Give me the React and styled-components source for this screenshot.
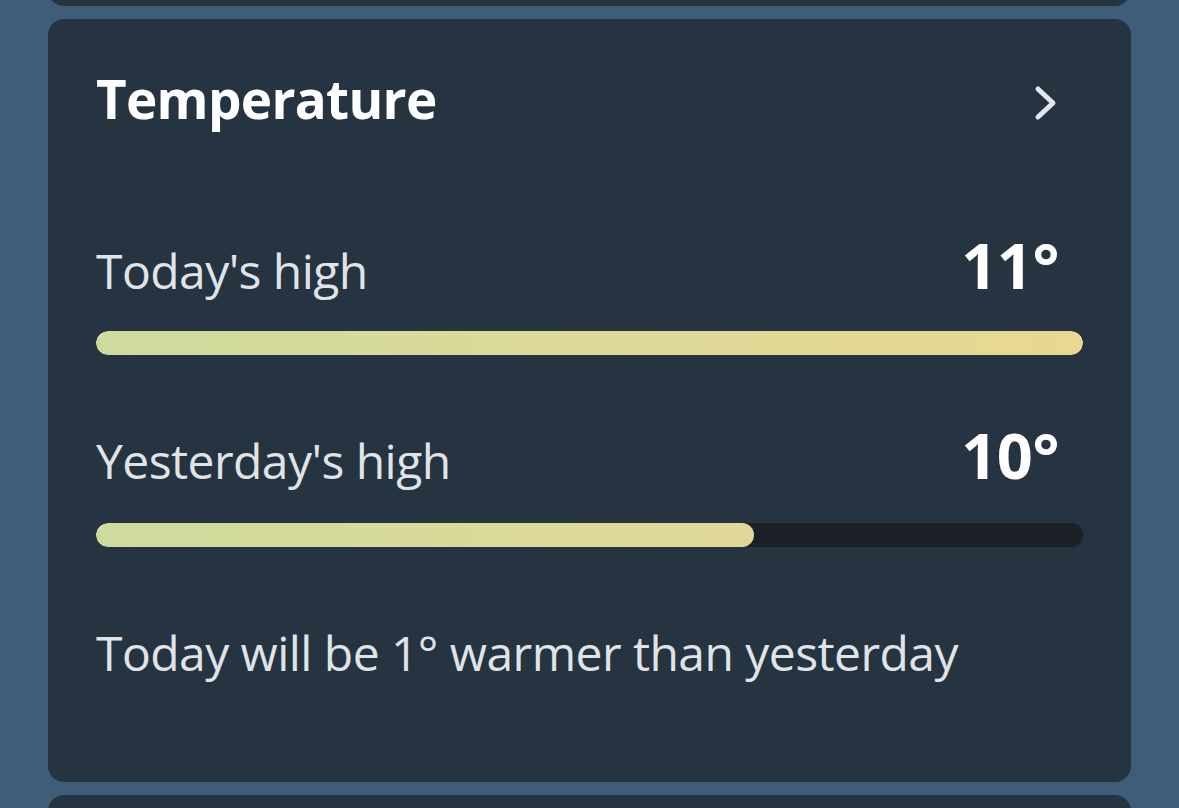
import React from "react";
import styled, { createGlobalStyle } from "styled-components";

const Global = createGlobalStyle`
  html, body { margin: 0; padding: 0; background: #3f5c79; }
  body { font-family: "Open Sans", "Noto Sans", sans-serif; overflow: hidden; }
`;

const Page = styled.div`
  width: 1179px;
  height: 808px;
  overflow: hidden;
  padding: 0 48px;
  box-sizing: border-box;
  display: flex;
  flex-direction: column;
  gap: 13px;
`;

const Card = styled.section`
  background: #263341;
  border-radius: 16px;
  flex-shrink: 0;
`;

const StubCard = styled(Card)`
  height: 100px;
  margin-top: -94px;
`;

const NextCard = styled(Card)`
  height: 200px;
`;

const MainCard = styled(Card)`
  padding: 48px 48px 0;
  height: 763px;
  box-sizing: border-box;
`;

const Header = styled.div`
  display: flex;
  align-items: center;
  justify-content: space-between;
  padding-right: 24px;
  height: 64px;
`;

const Title = styled.h2`
  margin: 0;
  font-size: 53px;
  font-weight: 700;
  letter-spacing: -0.7px;
  color: #ffffff;
  line-height: 64px;
`;

const Chevron = styled.svg`
  width: 26px;
  height: 36px;
  display: block;
  margin-top: 7px;
`;

const Row = styled.div`
  margin-top: ${(p) => p.$top}px;
`;

const RowHead = styled.div`
  display: flex;
  align-items: baseline;
  justify-content: space-between;
  padding-right: 24px;
`;

const Label = styled.span`
  font-size: 48px;
  letter-spacing: -0.55px;
  color: #e0e3e7;
  line-height: 64px;
`;

const Value = styled.span`
  font-size: 63px;
  font-weight: 700;
  letter-spacing: -0.4px;
  color: #ffffff;
  line-height: 64px;
`;

const Track = styled.div`
  margin-top: ${(p) => p.$gap}px;
  height: 24px;
  border-radius: 12px;
  background: #1b2027;
  overflow: hidden;
`;

const Fill = styled.div`
  height: 100%;
  border-radius: 12px;
  background: linear-gradient(90deg, #cfdb9e 0%, #e9d792 100%);
  background-size: ${(p) => p.$full}px 100%;
`;

const Summary = styled.p`
  margin: 74px 0 0;
  font-size: 48px;
  letter-spacing: -0.55px;
  color: #e0e3e7;
  line-height: 64px;
`;

export default function App() {
  const trackWidth = 987;
  return (
    <>
      <Global />
      <Page>
        <StubCard />
        <MainCard>
          <Header>
            <Title>Temperature</Title>
            <Chevron viewBox="0 0 26 36">
              <path
                d="M5 4 L20 18 L5 32"
                fill="none"
                stroke="#e3e6ea"
                strokeWidth="5"
                strokeLinecap="round"
                strokeLinejoin="round"
              />
            </Chevron>
          </Header>
          <Row $top={102}>
            <RowHead>
              <Label>Today's high</Label>
              <Value>11°</Value>
            </RowHead>
            <Track $gap={28}>
              <Fill $full={trackWidth} style={{ width: "100%" }} />
            </Track>
          </Row>
          <Row $top={68}>
            <RowHead>
              <Label>Yesterday's high</Label>
              <Value>10°</Value>
            </RowHead>
            <Track $gap={30}>
              <Fill $full={trackWidth} style={{ width: `${(658 / 987) * 100}%` }} />
            </Track>
          </Row>
          <Summary>Today will be 1° warmer than yesterday</Summary>
        </MainCard>
        <NextCard />
      </Page>
    </>
  );
}
